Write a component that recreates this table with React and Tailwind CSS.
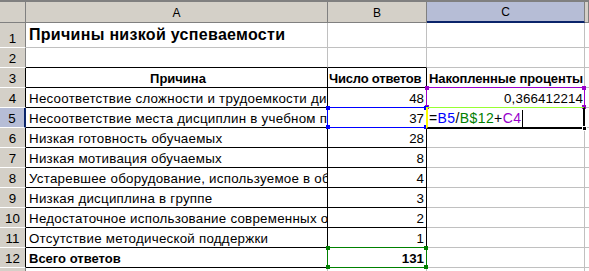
import React from 'react';

const rows = [
  { n: 1, a: 'Причины низкой успеваемости', title: true },
  { n: 2 },
  { n: 3, a: 'Причина', b: 'Число ответов', c: 'Накопленные проценты', head: true },
  { n: 4, a: 'Несоответствие сложности и трудоемкости дисциплин', b: '48', c: '0,366412214' },
  { n: 5, a: 'Несоответствие места дисциплин в учебном плане', b: '37', formula: true },
  { n: 6, a: 'Низкая готовность обучаемых', b: '28' },
  { n: 7, a: 'Низкая мотивация обучаемых', b: '8' },
  { n: 8, a: 'Устаревшее оборудование, используемое в обучении', b: '4' },
  { n: 9, a: 'Низкая дисциплина в группе', b: '3' },
  { n: 10, a: 'Недостаточное использование современных образовательных технологий', b: '2' },
  { n: 11, a: 'Отсутствие методической поддержки', b: '1' },
  { n: 12, a: 'Всего ответов', b: '131', bold: true },
  { n: 13 },
];

const inTable = (n) => n >= 3 && n <= 12;

// range-finder box with its four corner handles
const RangeBox = ({ className, color }) => (
  <div className={`absolute border ${className}`}>
    <div className={`absolute -left-[2px] -top-[2px] w-[4px] h-[4px] ${color}`} />
    <div className={`absolute -right-[2px] -top-[2px] w-[4px] h-[4px] ${color}`} />
    <div className={`absolute -left-[2px] -bottom-[2px] w-[4px] h-[4px] ${color}`} />
    <div className={`absolute -right-[2px] -bottom-[2px] w-[4px] h-[4px] ${color}`} />
  </div>
);

const App = () => {
  return (
    <div className="relative w-[589px] h-[271px] overflow-hidden bg-white font-['Liberation_Sans',Arial,sans-serif] text-black">
      <div className="grid grid-cols-[26px_302px_99px_158px_1fr] grid-rows-[23px_25px_repeat(11,20px)_1fr] h-full">
        {/* column headers */}
        <div className="bg-[#d4d0c8] border-t-2 border-t-[#808080] border-b border-b-[#808080] border-r border-r-[#808080]" />
        {['A', 'B', 'C', ''].map((l) => (
          <div
            key={l || 'D'}
            className={`flex items-center justify-center pt-[1px] text-[12px] leading-[14px] border-t-2 border-t-[#808080] border-r border-r-[#808080] ${
              l === 'C' ? 'bg-[#b6bdd6] border-b-2 border-b-[#0a246a]' : 'bg-[#d4d0c8] border-b border-b-[#808080]'
            }`}
          >
            {l}
          </div>
        ))}

        {rows.map((r) => {
          const t = inTable(r.n);
          const bBottom = r.n >= 2 && r.n <= 12 ? 'border-b-black' : 'border-b-[#c0c0c0]';
          return (
            <React.Fragment key={r.n}>
              <div
                className={`flex items-end justify-center pb-[1px] text-[13.33px] leading-[15px] border-b border-b-white border-r ${
                  r.n === 5 ? 'bg-[#b6bdd6] border-r-2 border-r-[#0a246a]' : 'bg-[#d4d0c8]'
                } ${t ? (r.n === 5 ? '' : 'border-r-black') : 'border-r-[#808080]'}`}
              >
                {r.n}
              </div>

              <div
                className={`flex items-end overflow-hidden whitespace-nowrap border-b border-r ${bBottom} ${
                  t ? 'border-r-black' : 'border-r-[#c0c0c0]'
                } ${
                  r.title
                    ? 'pl-[3px] pb-[3px] text-[16px] leading-[18px] font-bold tracking-[0.3px]'
                    : r.head || r.bold
                    ? 'pl-[3px] pb-[1px] text-[13px] leading-[15px] font-bold'
                    : 'pl-[3px] pb-[1px] text-[13.33px] leading-[15px] tracking-[0.25px]'
                } ${r.head ? 'justify-center' : ''}`}
              >
                {r.a}
              </div>

              <div
                className={`flex items-end overflow-hidden whitespace-nowrap pb-[1px] leading-[15px] border-b border-r ${bBottom} ${
                  t ? 'border-r-black' : 'border-r-[#c0c0c0]'
                } ${
                  r.head
                    ? 'pl-[1px] text-[13px] font-bold tracking-[-0.2px]'
                    : r.bold
                    ? 'justify-end pr-[2px] text-[13.33px] font-bold'
                    : 'justify-end pr-[2px] text-[13.33px]'
                }`}
              >
                {r.b}
              </div>

              <div
                className={`flex items-end overflow-hidden whitespace-nowrap pb-[1px] leading-[15px] border-b border-b-[#c0c0c0] border-r border-r-[#c0c0c0] ${
                  r.head
                    ? 'pl-[2px] text-[13px] font-bold tracking-[-0.1px]'
                    : r.formula
                    ? 'pl-[2px] text-[14px] tracking-[0.4px]'
                    : 'justify-end pr-[1px] text-[13.33px] tracking-[0.1px]'
                }`}
              >
                {r.formula ? (
                  <span className="flex items-end">
                    <span>=</span>
                    <span className="text-[#0000ff]">B5</span>
                    <span>/</span>
                    <span className="text-[#008000]">B$12</span>
                    <span>+</span>
                    <span className="text-[#9900cc]">C4</span>
                    <span className="inline-block w-px h-[17px] bg-black ml-[1px] mb-[-1px]" />
                  </span>
                ) : (
                  r.c
                )}
              </div>

              <div className="border-b border-b-[#c0c0c0]" />
            </React.Fragment>
          );
        })}
      </div>

      {/* range finders: C4 (purple), B5 (blue), B12 (green) */}
      <RangeBox className="left-[426px] top-[87px] w-[159px] h-[21px] border-[#9900cc]" color="bg-[#9900cc]" />
      <RangeBox className="left-[327px] top-[107px] w-[100px] h-[21px] border-[#0000ff]" color="bg-[#0000ff]" />
      <RangeBox className="left-[327px] top-[247px] w-[100px] h-[21px] border-[#008000]" color="bg-[#008000]" />

      {/* active cell C5 with fill handle */}
      <div className="absolute left-[426px] top-[107px] w-[159px] h-[22px] border-t border-t-[#99ff33] border-l-2 border-l-[#ffff00] border-r-2 border-r-black border-b-2 border-b-black">
        <div className="absolute -right-[4px] -bottom-[4px] w-[5px] h-[5px] bg-black border border-white" />
      </div>
    </div>
  );
};

export default App;
